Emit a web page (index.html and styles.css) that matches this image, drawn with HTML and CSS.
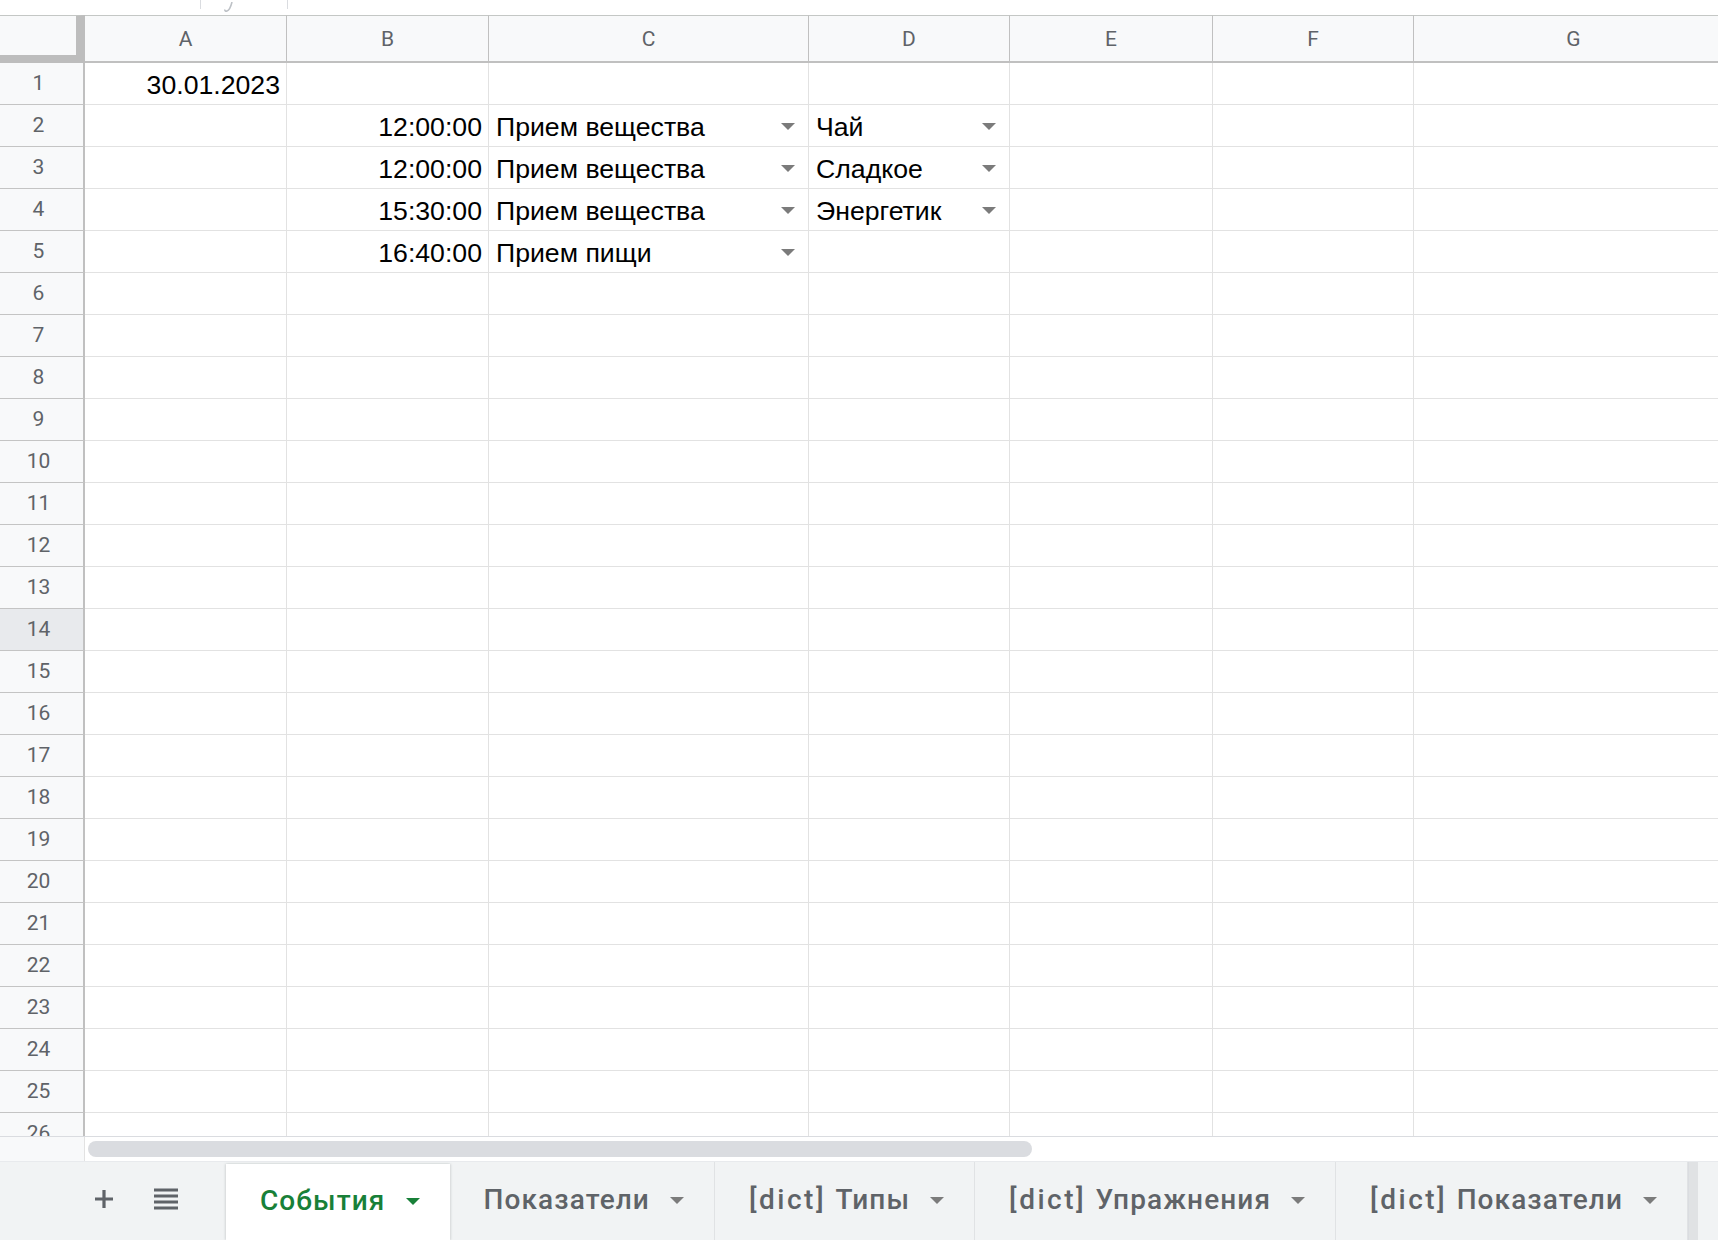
FILE: index.html
```html
<!DOCTYPE html>
<html lang="ru">
<head>
<meta charset="utf-8">
<title>Sheet</title>
<link rel="stylesheet" href="styles.css">
</head>
<body>
<div class="app">
  <div class="formula">
    <div class="namebox"></div>
    <div class="fx"><svg width="16" height="12" viewBox="0 0 16 12"><path d="M9 0 C8 4 7 8 4 9 C2.5 9.5 1.5 8.5 2 7.5" fill="none" stroke="#bdc1c6" stroke-width="1.6"/></svg></div>
    <div class="sep"></div>
  </div>
  <div class="sheet">
    <div class="corner"></div>
    <div class="ch">A</div><div class="ch">B</div><div class="ch">C</div><div class="ch">D</div><div class="ch">E</div><div class="ch">F</div><div class="ch">G</div>

    <div class="rh">1</div><div class="c r">30.01.2023</div><div class="c"></div><div class="c"></div><div class="c"></div><div class="c"></div><div class="c"></div><div class="c"></div>
    <div class="rh">2</div><div class="c"></div><div class="c r">12:00:00</div><div class="c dd">Прием вещества<i class="arr"></i></div><div class="c dd">Чай<i class="arr"></i></div><div class="c"></div><div class="c"></div><div class="c"></div>
    <div class="rh">3</div><div class="c"></div><div class="c r">12:00:00</div><div class="c dd">Прием вещества<i class="arr"></i></div><div class="c dd">Сладкое<i class="arr"></i></div><div class="c"></div><div class="c"></div><div class="c"></div>
    <div class="rh">4</div><div class="c"></div><div class="c r">15:30:00</div><div class="c dd">Прием вещества<i class="arr"></i></div><div class="c dd">Энергетик<i class="arr"></i></div><div class="c"></div><div class="c"></div><div class="c"></div>
    <div class="rh">5</div><div class="c"></div><div class="c r">16:40:00</div><div class="c dd">Прием пищи<i class="arr"></i></div><div class="c"></div><div class="c"></div><div class="c"></div><div class="c"></div>
    <div class="rh">6</div><div class="c"></div><div class="c"></div><div class="c"></div><div class="c"></div><div class="c"></div><div class="c"></div><div class="c"></div>
    <div class="rh">7</div><div class="c"></div><div class="c"></div><div class="c"></div><div class="c"></div><div class="c"></div><div class="c"></div><div class="c"></div>
    <div class="rh">8</div><div class="c"></div><div class="c"></div><div class="c"></div><div class="c"></div><div class="c"></div><div class="c"></div><div class="c"></div>
    <div class="rh">9</div><div class="c"></div><div class="c"></div><div class="c"></div><div class="c"></div><div class="c"></div><div class="c"></div><div class="c"></div>
    <div class="rh">10</div><div class="c"></div><div class="c"></div><div class="c"></div><div class="c"></div><div class="c"></div><div class="c"></div><div class="c"></div>
    <div class="rh">11</div><div class="c"></div><div class="c"></div><div class="c"></div><div class="c"></div><div class="c"></div><div class="c"></div><div class="c"></div>
    <div class="rh">12</div><div class="c"></div><div class="c"></div><div class="c"></div><div class="c"></div><div class="c"></div><div class="c"></div><div class="c"></div>
    <div class="rh">13</div><div class="c"></div><div class="c"></div><div class="c"></div><div class="c"></div><div class="c"></div><div class="c"></div><div class="c"></div>
    <div class="rh hover">14</div><div class="c"></div><div class="c"></div><div class="c"></div><div class="c"></div><div class="c"></div><div class="c"></div><div class="c"></div>
    <div class="rh">15</div><div class="c"></div><div class="c"></div><div class="c"></div><div class="c"></div><div class="c"></div><div class="c"></div><div class="c"></div>
    <div class="rh">16</div><div class="c"></div><div class="c"></div><div class="c"></div><div class="c"></div><div class="c"></div><div class="c"></div><div class="c"></div>
    <div class="rh">17</div><div class="c"></div><div class="c"></div><div class="c"></div><div class="c"></div><div class="c"></div><div class="c"></div><div class="c"></div>
    <div class="rh">18</div><div class="c"></div><div class="c"></div><div class="c"></div><div class="c"></div><div class="c"></div><div class="c"></div><div class="c"></div>
    <div class="rh">19</div><div class="c"></div><div class="c"></div><div class="c"></div><div class="c"></div><div class="c"></div><div class="c"></div><div class="c"></div>
    <div class="rh">20</div><div class="c"></div><div class="c"></div><div class="c"></div><div class="c"></div><div class="c"></div><div class="c"></div><div class="c"></div>
    <div class="rh">21</div><div class="c"></div><div class="c"></div><div class="c"></div><div class="c"></div><div class="c"></div><div class="c"></div><div class="c"></div>
    <div class="rh">22</div><div class="c"></div><div class="c"></div><div class="c"></div><div class="c"></div><div class="c"></div><div class="c"></div><div class="c"></div>
    <div class="rh">23</div><div class="c"></div><div class="c"></div><div class="c"></div><div class="c"></div><div class="c"></div><div class="c"></div><div class="c"></div>
    <div class="rh">24</div><div class="c"></div><div class="c"></div><div class="c"></div><div class="c"></div><div class="c"></div><div class="c"></div><div class="c"></div>
    <div class="rh">25</div><div class="c"></div><div class="c"></div><div class="c"></div><div class="c"></div><div class="c"></div><div class="c"></div><div class="c"></div>
    <div class="rh">26</div><div class="c"></div><div class="c"></div><div class="c"></div><div class="c"></div><div class="c"></div><div class="c"></div><div class="c"></div>
  </div>
  <div class="hscroll">
    <div class="hs-left"></div>
    <div class="hs-track"><div class="thumb"></div></div>
  </div>
  <div class="tabbar">
    <div class="tools">
      <span class="plus"><svg width="22" height="22" viewBox="0 0 22 22"><path d="M11 2v18M2 11h18" stroke="#5f6368" stroke-width="3.2"/></svg></span>
      <span class="menu"><svg width="24" height="22" viewBox="0 0 24 22"><path d="M0 2h24M0 8h24M0 14h24M0 20h24" stroke="#5f6368" stroke-width="3"/></svg></span>
    </div>
    <div class="tab active">События<i class="tarr"></i></div>
    <div class="tab">Показатели<i class="tarr"></i></div>
    <div class="tab"><span><span class="pfx">[dict] </span>Типы</span><i class="tarr"></i></div>
    <div class="tab"><span><span class="pfx">[dict] </span>Упражнения</span><i class="tarr"></i></div>
    <div class="tab"><span><span class="pfx">[dict] </span>Показатели</span><i class="tarr"></i></div>
    <div class="edge"></div>
  </div>
</div>
</body>
</html>
```
FILE: styles.css
```css
* { box-sizing: border-box; }
html, body { margin: 0; padding: 0; }
body {
  width: 1718px;
  height: 1240px;
  overflow: hidden;
  background: #fff;
  font-family: "Liberation Sans", Arial, sans-serif;
}
.app {
  display: flex;
  flex-direction: column;
  height: 1240px;
}
.formula {
  height: 15px;
  flex: none;
  display: flex;
  overflow: hidden;
}
.namebox {
  width: 201px;
  border-right: 1px solid #dadce0;
  height: 9px;
}
.fx {
  width: 86px;
  padding-left: 22px;
  height: 12px;
}
.sep {
  width: 1px;
  height: 9px;
  background: #dadce0;
}
.sheet {
  flex: none;
  height: 1122px;
  overflow: hidden;
  display: grid;
  grid-template-columns: 85px 202px 202px 320px 201px 203px 201px 320px;
  grid-template-rows: 48px;
  grid-auto-rows: 42px;
  border-bottom: 1px solid #dadce0;
}
.corner {
  background: #f8f9fa;
  border-top: 1px solid #c4c7c5;
  border-right: 9px solid #bdbdbd;
  border-bottom: 8px solid #bdbdbd;
}
.ch {
  background: #f8f9fa;
  border-top: 1px solid #c4c7c5;
  border-bottom: 2px solid #c0c0c0;
  border-right: 1px solid #c0c0c0;
  display: flex;
  align-items: center;
  justify-content: center;
  font-family: Roboto, "Liberation Sans", sans-serif;
  font-size: 21px;
  color: #5f6368;
  padding-top: 1px;
}
.rh {
  background: #f8f9fa;
  border-right: 2px solid #c0c0c0;
  border-bottom: 1px solid #c4c4c4;
  display: flex;
  align-items: center;
  justify-content: center;
  padding-right: 6px;
  padding-bottom: 2px;
  font-family: Roboto, "Liberation Sans", sans-serif;
  font-size: 21px;
  color: #5f6368;
}
.rh.hover { background: #e8eaed; }
.c {
  border-right: 1px solid #e2e2e2;
  border-bottom: 1px solid #e2e2e2;
  font-size: 26.67px;
  color: #000;
  display: flex;
  align-items: center;
  padding: 3px 6px 0 8px;
  white-space: nowrap;
  overflow: hidden;
}
.c.r { justify-content: flex-end; }
.c.dd {
  justify-content: space-between;
  padding-left: 7px;
  padding-right: 13px;
}
.arr {
  display: block;
  width: 0;
  height: 0;
  border-left: 7px solid transparent;
  border-right: 7px solid transparent;
  border-top: 7px solid #7b7b7b;
  margin-top: -2px;
}
.hscroll {
  flex: none;
  height: 24px;
  display: flex;
}
.hs-left {
  width: 85px;
  background: #f8f9fa;
  border-right: 1px solid #e2e2e2;
}
.hs-track {
  flex: 1;
  padding: 4px 0 3px 3px;
}
.thumb {
  width: 944px;
  height: 16px;
  border-radius: 8px;
  background: #dadce0;
}
.tabbar {
  flex: 1;
  display: flex;
  background: #f1f3f4;
  border-top: 1px solid #e8eaed;
  font-family: Roboto, "Liberation Sans", sans-serif;
  font-weight: 500;
  font-size: 28px;
  letter-spacing: 1.1px;
  color: #5f6368;
}
.tools {
  width: 227px;
  display: flex;
  align-items: center;
  padding: 0 0 4px 93px;
  gap: 39px;
}
.tools span { display: flex; }
.tab {
  display: flex;
  align-items: center;
  gap: 20px;
  padding: 0 30px 4px 34px;
  border-right: 1px solid #e0e2e4;
  white-space: nowrap;
}
.pfx { letter-spacing: 2.5px; }
.tab.active {
  background: #fff;
  color: #188038;
  border-right: none;
  margin-top: 2px;
  box-shadow: -1px 0 2px rgba(60,64,67,0.15), 1px 0 2px rgba(60,64,67,0.15);
}
.tarr {
  display: block;
  width: 0;
  height: 0;
  border-left: 7px solid transparent;
  border-right: 7px solid transparent;
  border-top: 7px solid #7b7b7b;
  margin-top: 2px;
}
.tab.active .tarr { border-top-color: #188038; }
.edge {
  width: 10px;
  margin-left: auto;
  margin-right: 20px;
  background: #e0e2e4;
  border-left: 1px solid #dadce0;
}
```
